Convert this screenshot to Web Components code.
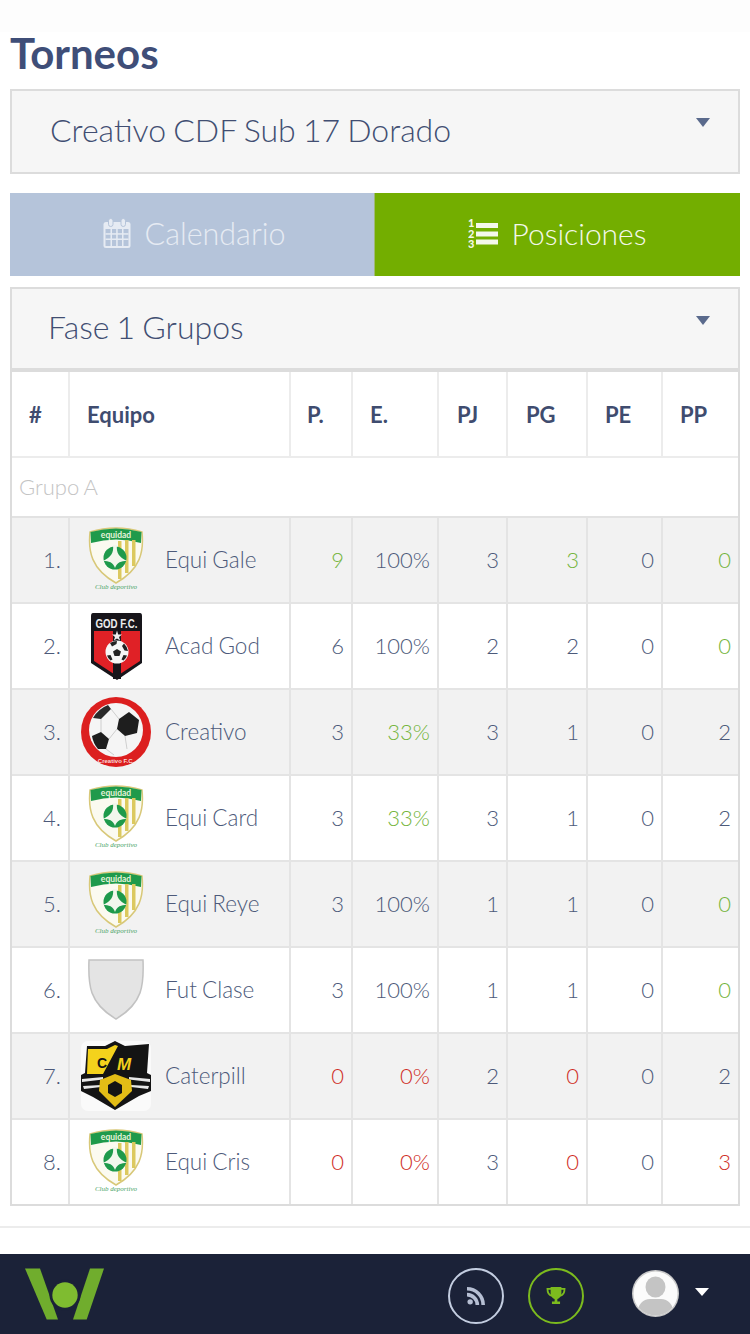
<!DOCTYPE html>
<html lang="es">
<head>
<meta charset="utf-8">
<title>Torneos</title>
<style>
  html, body { margin: 0; background: #fff; }
  body { width: 750px; height: 1334px; overflow: hidden; font-family: Lato, "Liberation Sans", sans-serif; color: #3f4c6f; }
</style>
</head>
<body>
<torneos-page>
  <select-box style="--pad:38px">Creativo CDF Sub 17 Dorado</select-box>
  <tab-bar slot="tabs"></tab-bar>
  <select-box slot="phase" style="--pad:36px; --bottom:4px">Fase 1 Grupos</select-box>
  <standings-table slot="table">
    <standing-row pos="1." team="Equi Gale" p="9" e="100%" pj="3" pg="3" pe="0" pp="0" colors="p:g pg:g pp:g"><team-crest kind="equidad"></team-crest></standing-row>
    <standing-row pos="2." team="Acad God" p="6" e="100%" pj="2" pg="2" pe="0" pp="0" colors="pp:g"><team-crest kind="god"></team-crest></standing-row>
    <standing-row pos="3." team="Creativo" p="3" e="33%" pj="3" pg="1" pe="0" pp="2" colors="e:g"><team-crest kind="creativo"></team-crest></standing-row>
    <standing-row pos="4." team="Equi Card" p="3" e="33%" pj="3" pg="1" pe="0" pp="2" colors="e:g"><team-crest kind="equidad"></team-crest></standing-row>
    <standing-row pos="5." team="Equi Reye" p="3" e="100%" pj="1" pg="1" pe="0" pp="0" colors="pp:g"><team-crest kind="equidad"></team-crest></standing-row>
    <standing-row pos="6." team="Fut Clase" p="3" e="100%" pj="1" pg="1" pe="0" pp="0" colors="pp:g"><team-crest kind="blank"></team-crest></standing-row>
    <standing-row pos="7." team="Caterpill" p="0" e="0%" pj="2" pg="0" pe="0" pp="2" colors="p:r e:r pg:r"><team-crest kind="caterpillar"></team-crest></standing-row>
    <standing-row pos="8." team="Equi Cris" p="0" e="0%" pj="3" pg="0" pe="0" pp="3" colors="p:r e:r pg:r pp:r"><team-crest kind="equidad"></team-crest></standing-row>
  </standings-table>
  <bottom-nav slot="nav"></bottom-nav>
</torneos-page>

<script>
const COLUMNS = '58px 221px 62px 86px 69px 80px 75px 75px';

class TorneosPage extends HTMLElement {
    constructor() {
        super();
        this.attachShadow({ mode: 'open' });
    }

    connectedCallback() {
        this.shadowRoot.innerHTML = `
            <style>
                :host { display: flex; flex-direction: column; height: 1334px; }
                .strip { height: 32px; background: #fdfdfd; flex: none; }
                h1 {
                    margin: 0; padding: 0 10px; height: 57px; flex: none;
                    font: 700 42px/43px Lato, sans-serif; color: #3f4e78;
                }
                .content { padding: 0 10px; display: flex; flex-direction: column; }
                .tabs { margin-top: 19px; }
                .phase { margin-top: 11px; }
                .rule { margin-top: 20px; border-top: 2px solid #ececec; }
                .grow { flex: 1; }
            </style>
            <div class="strip"></div>
            <h1>Torneos</h1>
            <div class="content">
                <slot></slot>
                <div class="tabs"><slot name="tabs"></slot></div>
                <div class="phase"><slot name="phase"></slot></div>
                <slot name="table"></slot>
            </div>
            <div class="rule"></div>
            <div class="grow"></div>
            <slot name="nav"></slot>
        `;
    }
}

class SelectBox extends HTMLElement {
    constructor() {
        super();
        this.attachShadow({ mode: 'open' });
    }

    connectedCallback() {
        this.shadowRoot.innerHTML = `
            <style>
                :host {
                    display: flex; align-items: center; position: relative;
                    box-sizing: border-box; height: 85px;
                    background: #f6f6f6;
                    border: 2px solid #dcdcdc;
                    border-bottom-width: var(--bottom, 2px);
                    padding-left: var(--pad, 38px); padding-bottom: 4px;
                    font: 300 32px Lato, sans-serif; color: #414e72;
                    word-spacing: -1.5px;
                }
                .caret {
                    position: absolute; right: 28px; top: 27px;
                    width: 0; height: 0;
                    border-left: 7.5px solid transparent;
                    border-right: 7.5px solid transparent;
                    border-top: 9px solid #5a6a8c;
                }
            </style>
            <slot></slot><span class="caret"></span>
        `;
    }
}

class TabBar extends HTMLElement {
    constructor() {
        super();
        this.attachShadow({ mode: 'open' });
    }

    connectedCallback() {
        const cal = `<svg width="28" height="30" viewBox="0 0 28 30" fill="none">
            <rect x="0.5" y="4" width="27" height="26" rx="2.5" fill="#e6ebf3"/>
            <rect x="2.5" y="11" width="23" height="17" fill="#b5c4da"/>
            <g fill="#e6ebf3">
                <rect x="7.5" y="11" width="1.5" height="17"/><rect x="13.2" y="11" width="1.5" height="17"/><rect x="19" y="11" width="1.5" height="17"/>
                <rect x="2.5" y="15.2" width="23" height="1.5"/><rect x="2.5" y="20.5" width="23" height="1.5"/>
            </g>
            <rect x="5.5" y="0.5" width="4.5" height="8" rx="2.2" fill="#e6ebf3" stroke="#b5c4da"/>
            <rect x="18" y="0.5" width="4.5" height="8" rx="2.2" fill="#e6ebf3" stroke="#b5c4da"/>
        </svg>`;
        const list = `<svg width="30" height="40" viewBox="0 -5 30 40" fill="#f4f8ea">
            <text x="0" y="9" font-family="Lato" font-weight="900" font-size="11">1</text>
            <text x="0" y="19.5" font-family="Lato" font-weight="900" font-size="11">2</text>
            <text x="0" y="30" font-family="Lato" font-weight="900" font-size="11">3</text>
            <rect x="8" y="5" width="22" height="5"/>
            <rect x="8" y="13.5" width="22" height="5"/>
            <rect x="8" y="21.5" width="22" height="5"/>
        </svg>`;
        this.shadowRoot.innerHTML = `
            <style>
                :host { display: grid; grid-template-columns: 364px 366px; height: 83px; }
                .tab {
                    display: flex; align-items: center; justify-content: center; gap: 14px;
                    box-sizing: border-box; padding: 0 0 4px 4px;
                    font: 300 30.5px Lato, sans-serif; color: #e6ebf3; background: #b5c4da;
                }
                .tab.on {
                    background: #73ae00; color: #f4f8ea; border-left: 1px solid #9fb877;
                    padding-left: 0; gap: 13px; font-size: 30px;
                }
                svg { flex: none; }
            </style>
            <div class="tab">${cal}<span>Calendario</span></div>
            <div class="tab on">${list}<span>Posiciones</span></div>
        `;
    }
}

class StandingsTable extends HTMLElement {
    constructor() {
        super();
        this.attachShadow({ mode: 'open' });
    }

    connectedCallback() {
        const heads = ['#', 'Equipo', 'P.', 'E.', 'PJ', 'PG', 'PE', 'PP'];
        this.shadowRoot.innerHTML = `
            <style>
                :host {
                    display: block; box-sizing: border-box;
                    border: 2px solid #dcdcdc; border-top: 0;
                    background: #fff;
                }
                .head {
                    display: grid; grid-template-columns: ${COLUMNS}; height: 84px;
                    border-bottom: 2px solid #ececec;
                }
                .head div {
                    display: flex; align-items: center; padding-left: 17px;
                    border-right: 2px solid #ececec;
                    font: 700 22px Lato, sans-serif; color: #3f4c6f;
                }
                .head div:nth-child(3) { padding-left: 16px; }
                .head div:nth-child(5), .head div:nth-child(6) { padding-left: 18px; }
                .head div:last-child { border-right: 0; }
                .group {
                    height: 58px; display: flex; align-items: center; padding: 0 0 2px 7px;
                    box-sizing: border-box;
                    font: 300 22px Lato, sans-serif; color: #c4c4c4; word-spacing: -1px;
                }
                .line { border-top: 2px solid #e2e2e2; }
            </style>
            <div class="head">${heads.map(h => `<div>${h}</div>`).join('')}</div>
            <div class="group">Grupo A</div>
            <div class="line"></div>
            <slot></slot>
        `;
    }
}

class StandingRow extends HTMLElement {
    constructor() {
        super();
        this.attachShadow({ mode: 'open' });
    }

    connectedCallback() {
        const colors = {};
        (this.getAttribute('colors') || '').split(' ').forEach(c => {
            const parts = c.split(':');
            colors[parts[0]] = parts[1];
        });
        const num = key => `<div class="n ${colors[key] || ''}">${this.getAttribute(key)}</div>`;
        this.shadowRoot.innerHTML = `
            <style>
                :host {
                    display: grid; grid-template-columns: ${COLUMNS}; height: 86px;
                    box-sizing: border-box; background: #fff;
                    border-bottom: 2px solid #e4e4e4;
                    font: 300 22px Lato, sans-serif; color: #4d5a7a;
                }
                :host(:nth-of-type(odd)) { background: #f2f2f2; }
                :host(:last-of-type) { border-bottom: 0; height: 84px; }
                div { display: flex; align-items: center; }
                .n, .pos {
                    justify-content: flex-end; padding-right: 7px; padding-bottom: 2px;
                    border-right: 2px solid #e4e4e4;
                }
                .n:last-child { border-right: 0; }
                .team { padding-left: 11px; gap: 14px; border-right: 2px solid #e4e4e4; }
                .team span { padding-bottom: 2px; font-size: 22.5px; word-spacing: -1px; }
                .g { color: #75b53c; }
                .r { color: #cf2e25; }
                .crest { width: 70px; height: 70px; flex: none; }
            </style>
            <div class="pos">${this.getAttribute('pos')}</div>
            <div class="team"><div class="crest"><slot></slot></div><span>${this.getAttribute('team')}</span></div>
            ${num('p')}${num('e')}${num('pj')}${num('pg')}${num('pe')}${num('pp')}
        `;
    }
}

class TeamCrest extends HTMLElement {
    constructor() {
        super();
        this.attachShadow({ mode: 'open' });
    }

    art(kind) {
        if (kind === 'equidad') {
            return `<path d="M9 7Q35 -1 61 7C63 26 60 44 35 58C10 44 7 26 9 7Z" fill="#fbfaf0" stroke="#d8c878" stroke-width="1.5"/>
                <path d="M9.5 7Q35 0 60.5 7L60 18Q35 11 10 18Z" fill="#1f9a4b"/>
                <text x="35" y="13" text-anchor="middle" font-family="Lato" font-weight="700" font-size="8.5" fill="#e6f3da">equidad</text>
                <g fill="#dcc95e"><rect x="37" y="16" width="3.5" height="38"/><rect x="44" y="15" width="3.5" height="33"/><rect x="51" y="15" width="3.5" height="26"/></g>
                <circle cx="34" cy="33" r="11.5" fill="#1f9a4b"/>
                <path d="M32 20C33 28 30 32 22 36C28 36 32 37 34 43C36 37 40 36 46 36C38 32 35 28 36 20Z" fill="#f2f7ec"/>
                <text x="35" y="64" text-anchor="middle" font-family="Liberation Serif" font-style="italic" font-size="7" fill="#4aa366">Club deportivo</text>`;
        }
        if (kind === 'god') {
            return `<path d="M12 2H59Q61 2 61 5V52L36 69L10 52V5Q10 2 12 2Z" fill="#17151a"/>
                <path d="M13 20H59V50L36 65L13 50Z" fill="#e02126"/>
                <path d="M32 20H40V68H32Z" fill="#17151a"/>
                <text x="35.5" y="16.5" text-anchor="middle" font-family="Liberation Sans" font-weight="700" font-size="12" textLength="42" lengthAdjust="spacingAndGlyphs" fill="#eeeeee">GOD F.C.</text>
                <path d="M36 19.5L37.2 23.5H41L38 26L39.2 29.5L36 27.5L32.8 29.5L34 26L31 23.5H34.8Z" fill="#eee"/>
                <circle cx="36" cy="41" r="11.5" fill="#f6f6f6"/>
                <path d="M36 38L40 40.5L38.5 45H33.5L32 40.5Z" fill="#222"/>
                <path d="M29 32Q32 30 36 30L35.5 33L31 35.5ZM43 32.5Q46.5 36 47 40L43.5 39.5L41 35Z" fill="#222"/>
                <path d="M26 44.5L29.5 44L31.5 48.5L29.5 49.5Q27 47.5 26 44.5ZM46 44.5L42.5 44L40.5 48.5L42.5 49.5Q45 47.5 46 44.5Z" fill="#222"/>`;
        }
        if (kind === 'creativo') {
            return `<circle cx="35" cy="35" r="35" fill="#dc1f1f"/>
                <circle cx="35" cy="33" r="27" fill="#f5f5f5"/>
                <path d="M38 22L48 15L58 23L56 36L44 39L36 32Z" fill="#1e1e1e"/>
                <path d="M11 39L20 35L28 42L25 52L17 52Q12 46 11 39Z" fill="#1e1e1e"/>
                <path d="M12 21Q17 12 27 8L30 12L20 22Z" fill="#2a2a2a"/>
                <path d="M30 12L38 22M20 22L20 35M28 42L36 32M44 39L46 52M25 52L33 58" stroke="#c4c4c4" stroke-width="0.8" fill="none"/>
                <text x="35" y="66" text-anchor="middle" font-family="Liberation Sans" font-weight="700" font-size="6" fill="#f9dcdc">Creativo F.C.</text>`;
        }
        if (kind === 'caterpillar') {
            return `<rect x="0" y="0" width="70" height="70" rx="7" fill="#fafafa"/>
                <path d="M6 5L24 5L34 0L44 5L68 3L66 32L70 34V50L58 55L34 69L12 56L0 50V34L4 32Z" fill="#141414"/>
                <path d="M7 8L26 8L34 4L37 5L22 33H6Z" fill="#f4d21c"/>
                <text x="16" y="27" font-family="Liberation Sans" font-weight="700" font-size="14" fill="#141414">C</text>
                <text x="36" y="29" font-family="Liberation Sans" font-weight="700" font-style="italic" font-size="17" fill="#f2cf1c">M</text>
                <path d="M1 38L22 36V38.5L1 41ZM69 38L48 36V38.5L69 41ZM2 45L20 44V46L3 48ZM68 45L50 44V46L67 48Z" fill="#e8e8e8"/>
                <path d="M34 33L50 39L51 50L34 66L18 50L19 39Z" fill="#e3bd16"/>
                <path d="M34 40L41 44L41 52L34 56L27 52L27 44Z" fill="#141414"/>`;
        }
        return `<path d="M8 5H62C63 30 62 48 35 64C8 48 7 30 8 5Z" fill="#e4e4e4" stroke="#c2c2c2" stroke-width="1.5"/>`;
    }

    connectedCallback() {
        this.shadowRoot.innerHTML = `
            <style>:host { display: block; width: 70px; height: 70px; } svg { display: block; }</style>
            <svg width="70" height="70" viewBox="0 0 70 70">${this.art(this.getAttribute('kind'))}</svg>
        `;
    }
}

class BottomNav extends HTMLElement {
    constructor() {
        super();
        this.attachShadow({ mode: 'open' });
    }

    connectedCallback() {
        this.shadowRoot.innerHTML = `
            <style>
                :host {
                    display: flex; align-items: center; height: 80px; flex: none;
                    background: #1b2238; padding-left: 25px;
                }
                .logo { flex: none; }
                .right { margin-left: auto; display: flex; align-items: center; padding-right: 41px; }
                .round {
                    box-sizing: border-box; width: 56px; height: 56px; border-radius: 50%;
                    border: 2px solid #c3cde0; display: flex; align-items: center; justify-content: center;
                    margin-top: 3px;
                }
                .round.on { border-color: #7cbb1e; margin-left: 24px; }
                .avatar { margin-left: 48px; margin-top: -1px; }
                .caret {
                    margin-left: 16px; width: 0; height: 0;
                    border-left: 7.5px solid transparent;
                    border-right: 7.5px solid transparent;
                    border-top: 8px solid #fff;
                    margin-top: -4px;
                }
            </style>
            <svg class="logo" width="80" height="52" viewBox="0 0 80 52">
                <path d="M0 0.5H15L33 51.5H21.7Z" fill="#70ad2d"/>
                <path d="M65 0.5H79L61.7 51.5H48Z" fill="#70ad2d"/>
                <circle cx="40" cy="27" r="15.5" fill="#1b2238"/>
                <circle cx="40" cy="27" r="12.7" fill="#7fbc30"/>
            </svg>
            <div class="right">
                <div class="round">
                    <svg width="18" height="18" viewBox="0 0 20 20" fill="#b6bfd3">
                        <circle cx="3.5" cy="16.5" r="3"/>
                        <path d="M0 6.5A13.5 13.5 0 0 1 13.5 20H9.5A9.5 9.5 0 0 0 0 10.5Z"/>
                        <path d="M0 0A20 20 0 0 1 20 20H16A16 16 0 0 0 0 4Z"/>
                    </svg>
                </div>
                <div class="round on">
                    <svg width="22" height="18" viewBox="0 0 22 20">
                        <path d="M5 0H17V7C17 11 14 13 12.5 13.5V16H15.5V19H6.5V16H9.5V13.5C8 13 5 11 5 7Z" fill="#7cbb1e"/>
                        <path d="M5.5 2H1.5C1.5 6 3 9 6.5 10M16.5 2H20.5C20.5 6 19 9 15.5 10" fill="none" stroke="#7cbb1e" stroke-width="2"/>
                    </svg>
                </div>
                <svg class="avatar" width="47" height="47" viewBox="0 0 47 47">
                    <defs><clipPath id="av"><circle cx="23.5" cy="23.5" r="22"/></clipPath></defs>
                    <circle cx="23.5" cy="23.5" r="23.5" fill="#c9c9c9"/>
                    <circle cx="23.5" cy="23.5" r="22" fill="#fbfbfb"/>
                    <g clip-path="url(#av)" fill="#c4c4c4">
                        <ellipse cx="23.5" cy="17" rx="10" ry="10.5"/>
                        <path d="M5 47C5 34 11 29 18 29H29C36 29 42 34 42 47Z"/>
                    </g>
                </svg>
                <span class="caret"></span>
            </div>
        `;
    }
}

customElements.define('torneos-page', TorneosPage);
customElements.define('select-box', SelectBox);
customElements.define('tab-bar', TabBar);
customElements.define('standings-table', StandingsTable);
customElements.define('standing-row', StandingRow);
customElements.define('team-crest', TeamCrest);
customElements.define('bottom-nav', BottomNav);
</script>
</body>
</html>
